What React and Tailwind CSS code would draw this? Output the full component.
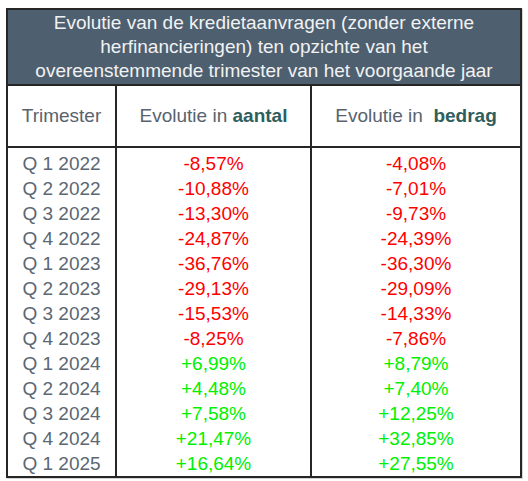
import React from "react";

const rows = [
  ["Q 1 2022", "-8,57%", "-4,08%"],
  ["Q 2 2022", "-10,88%", "-7,01%"],
  ["Q 3 2022", "-13,30%", "-9,73%"],
  ["Q 4 2022", "-24,87%", "-24,39%"],
  ["Q 1 2023", "-36,76%", "-36,30%"],
  ["Q 2 2023", "-29,13%", "-29,09%"],
  ["Q 3 2023", "-15,53%", "-14,33%"],
  ["Q 4 2023", "-8,25%", "-7,86%"],
  ["Q 1 2024", "+6,99%", "+8,79%"],
  ["Q 2 2024", "+4,48%", "+7,40%"],
  ["Q 3 2024", "+7,58%", "+12,25%"],
  ["Q 4 2024", "+21,47%", "+32,85%"],
  ["Q 1 2025", "+16,64%", "+27,55%"],
];

export default function App() {
  return (
    <div className="w-[528px] h-[481px] bg-white pt-[8px] pl-[6px] font-['Liberation_Sans',Arial,sans-serif]">
      <div className="w-[516px] border-2 border-[#262626] shadow-[1px_1px_0_#d4d4d4]">
        {/* title band */}
        <div className="bg-[#4e6070] text-[#f2f2f2] text-[19px] leading-[24px] text-center pt-[1px] pb-[1px] border-b-2 border-[#262626]">
          <div>Evolutie van de kredietaanvragen (zonder externe</div>
          <div>herfinancieringen) ten opzichte van het</div>
          <div>overeenstemmende trimester van het voorgaande jaar</div>
        </div>

        {/* column headers */}
        <div className="grid grid-cols-[109px_195px_1fr] h-[62px] border-b-2 border-[#262626] text-[19px] text-[#58636e]">
          <div className="flex items-center justify-center border-r-2 border-[#262626]">Trimester</div>
          <div className="flex items-center justify-center border-r-2 border-[#262626]">
            Evolutie in&nbsp;<span className="font-bold text-[#2f5e5d]">aantal</span>
          </div>
          <div className="flex items-center justify-center">
            Evolutie in&nbsp;&nbsp;<span className="font-bold text-[#2f5e5d]">bedrag</span>
          </div>
        </div>

        {/* data */}
        <div className="grid grid-cols-[109px_195px_1fr] text-[19px] leading-[25px]">
          <div className="flex flex-col border-r-2 border-[#262626] text-[#5b6773] text-center pt-[3px]">
            {rows.map((r) => (
              <div key={r[0]}>{r[0]}</div>
            ))}
          </div>
          <div className="flex flex-col border-r-2 border-[#262626] text-center pt-[3px]">
            {rows.map((r) => (
              <div key={r[0]} className={r[1].startsWith("-") ? "text-[#ff0000]" : "text-[#00f000]"}>
                {r[1]}
              </div>
            ))}
          </div>
          <div className="flex flex-col text-center pt-[3px]">
            {rows.map((r) => (
              <div key={r[0]} className={r[2].startsWith("-") ? "text-[#ff0000]" : "text-[#00f000]"}>
                {r[2]}
              </div>
            ))}
          </div>
        </div>
      </div>
    </div>
  );
}
